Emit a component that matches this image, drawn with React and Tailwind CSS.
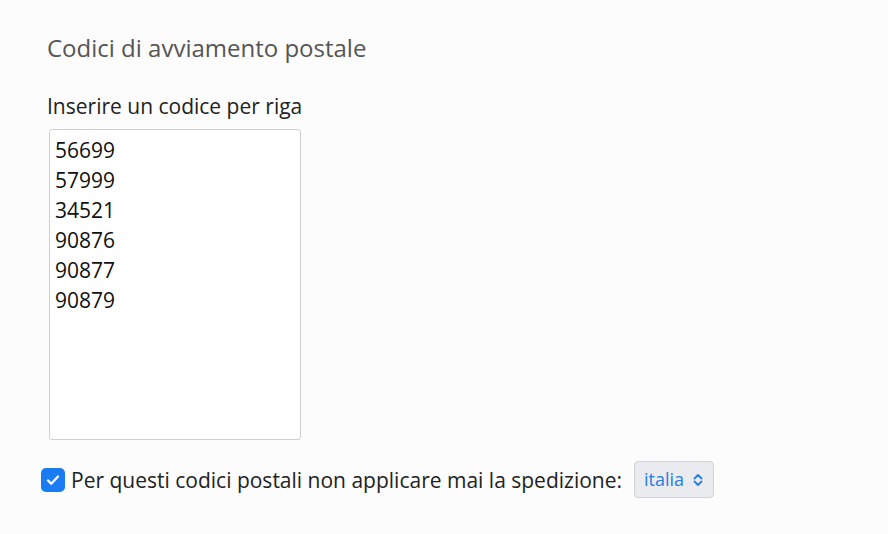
import { useState } from 'react';

const codes = ['56699', '57999', '34521', '90876', '90877', '90879'];

const App = () => {
  const [checked, setChecked] = useState(true);

  return (
    <div
      className="w-[888px] h-[534px] bg-[#fcfcfc] text-[#222] pl-[47px] pt-[33px]"
      style={{ fontFamily: '"Open Sans", "Noto Sans", sans-serif' }}
    >
      {/* Section title */}
      <h2 className="text-[24px] leading-[30px] text-[#555]">Codici di avviamento postale</h2>

      {/* Codes */}
      <label className="block mt-[29px] text-[21px] leading-[28px]">Inserire un codice per riga</label>
      <textarea
        className="block mt-[9px] ml-[2px] w-[252px] h-[311px] resize-none bg-white border border-[#cfcfcf] rounded-[3px] px-[5px] py-[5px] text-[21px] leading-[30px] text-[#111] outline-none"
        defaultValue={codes.join('\n')}
      />

      {/* Exclude option */}
      <div className="flex items-center mt-[21px] -ml-[6px]">
        <button
          onClick={() => setChecked(!checked)}
          className={`w-[24px] h-[24px] rounded-[5px] flex items-center justify-center ${
            checked ? 'bg-[#1a7cf2]' : 'bg-white border border-[#999]'
          }`}
        >
          {checked && (
            <svg className="w-[16px] h-[16px]" viewBox="0 0 16 16" fill="none">
              <path d="M3 8.5l3.2 3.2L13 4.5" stroke="white" strokeWidth="2.4" strokeLinecap="round" strokeLinejoin="round" />
            </svg>
          )}
        </button>
        <span className="ml-[6px] text-[21px] leading-[28px]">
          Per questi codici postali non applicare mai la spedizione:
        </span>
        <div className="ml-[12px] h-[37px] px-[9px] flex items-center gap-[8px] bg-[#e9ebee] border border-[#d0d2d6] rounded-[4px] text-[#2a7de1] text-[18px]">
          <span>italia</span>
          <svg className="w-[12px] h-[14px]" viewBox="0 0 12 14" fill="none">
            <path d="M2.5 5.5L6 2l3.5 3.5M2.5 8.5L6 12l3.5-3.5" stroke="#2a7de1" strokeWidth="1.8" strokeLinecap="round" strokeLinejoin="round" />
          </svg>
        </div>
      </div>
    </div>
  );
};

export default App;
